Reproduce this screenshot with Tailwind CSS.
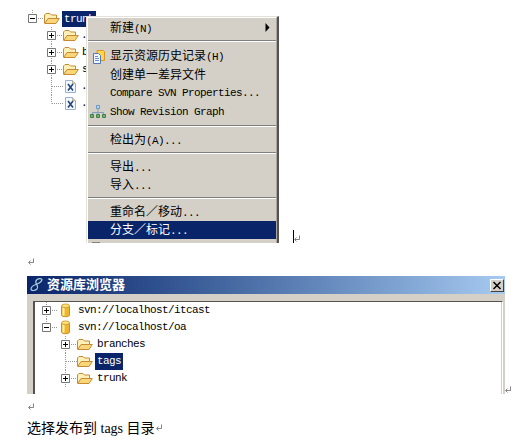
<!DOCTYPE html>
<html lang="zh-CN">
<head>
<meta charset="UTF-8" />
<meta name="viewport" content="width=device-width, initial-scale=1" />
<title>SVN tags</title>
<script src="https://cdn.jsdelivr.net/npm/@tailwindcss/browser@4"></script>
</head>
<body class="bg-white text-black overflow-hidden font-['Liberation_Mono','Noto_Sans_CJK_SC',monospace] text-[11px] tracking-[-0.6px]">

<!-- shared icons -->
<svg class="hidden">
  <symbol id="plus" viewBox="0 0 16 17">
    <path d="M4.5 0V17M10 8.5H16" stroke="#999" stroke-dasharray="1 1" />
    <path d="M.5 4.5h8v8h-8z" fill="#fff" stroke="#777" />
    <path d="M2 8.5h5M4.5 6v5" stroke="#000" />
  </symbol>
  <symbol id="minus" viewBox="0 0 16 17">
    <path d="M4.5 0V4M10 8.5H16" stroke="#999" stroke-dasharray="1 1" />
    <path d="M.5 4.5h8v8h-8z" fill="#fff" stroke="#777" />
    <path d="M2 8.5h5" stroke="#000" />
  </symbol>
  <symbol id="branch" viewBox="0 0 16 17">
    <path d="M4.5 0V17M5 8.5H16" stroke="#999" stroke-dasharray="1 1" fill="none" />
  </symbol>
  <symbol id="corner" viewBox="0 0 16 17">
    <path d="M4.5 0V8.5M5 8.5H16" stroke="#999" stroke-dasharray="1 1" fill="none" />
  </symbol>
  <symbol id="folder" viewBox="0 0 16 17">
    <path d="M.5 13V5L2 3.500h4L7.500 5H12.500V8" fill="#fff0b8" stroke="#c58a35" />
    <path d="M.7 13.500 4 8.500H15.300L12 13.500z" fill="#fbd679" stroke="#c58a35" stroke-linejoin="round" />
  </symbol>
  <symbol id="xfile" viewBox="0 0 16 17">
    <path d="M2.500 2.500h7l3 3v9h-10z" fill="#f3f8ff" stroke="#9ab0d0" />
    <path d="M9.500 2.500v3h3" fill="#e8d9a8" stroke="#b8b49a" />
    <path d="M5 6l5 6.500M10 6l-5 6.500" stroke="#244579" stroke-width="1.600" />
  </symbol>
  <symbol id="repo" viewBox="0 0 16 17">
    <path d="M3.500 4v9c0 2.300 8 2.300 8 0V4" fill="#efb52c" stroke="#c9902a" />
    <path d="M5.500 5v8.500" stroke="#fff3ae" stroke-width="2" />
    <ellipse cx="7.500" cy="3.800" rx="4" ry="1.800" fill="#fbe27c" stroke="#d3a034" />
  </symbol>
  <symbol id="enter" viewBox="0 0 8 8">
    <path d="M6.500 .5v4H2M3.500 2.500l-2 2 2 2" fill="none" stroke="#777" stroke-width=".9" />
  </symbol>
</svg>

<div class="relative h-[256px] pt-[10px] pl-7">
  <div class="flex items-center h-[17px]">
    <svg class="w-4 h-[17px]"><use href="#minus" /></svg>
    <svg class="w-4 h-[17px]"><use href="#folder" /></svg>
    <span class="ml-0.5 px-0.5 h-4 leading-4 bg-[#0a246a] text-white">trunk</span>
  </div>
  <div class="pl-[19px]">
    <div class="flex items-center h-[17px]">
      <svg class="w-4 h-[17px]"><use href="#plus" /></svg>
      <svg class="w-4 h-[17px]"><use href="#folder" /></svg>
      <span class="ml-0.5">.</span>
    </div>
    <div class="flex items-center h-[17px]">
      <svg class="w-4 h-[17px]"><use href="#plus" /></svg>
      <svg class="w-4 h-[17px]"><use href="#folder" /></svg>
      <span class="ml-[3px]">b</span>
    </div>
    <div class="flex items-center h-[17px]">
      <svg class="w-4 h-[17px]"><use href="#plus" /></svg>
      <svg class="w-4 h-[17px]"><use href="#folder" /></svg>
      <span class="ml-[3px]">s</span>
    </div>
    <div class="flex items-center h-[17px]">
      <svg class="w-4 h-[17px]"><use href="#branch" /></svg>
      <svg class="w-4 h-[17px]"><use href="#xfile" /></svg>
      <span class="ml-0.5">.</span>
    </div>
    <div class="flex items-center h-[17px]">
      <svg class="w-4 h-[17px]"><use href="#corner" /></svg>
      <svg class="w-4 h-[17px]"><use href="#xfile" /></svg>
      <span class="ml-0.5">.</span>
    </div>
  </div>

  <!-- context menu -->
  <div class="absolute left-[86px] top-4 w-[193px] h-[227px] bg-[#d4d0c8] border-l border-t border-[#e4e1da] border-r-2 border-r-[#55534f] overflow-hidden">
    <div class="h-full pt-px border-l border-t border-white border-r border-r-[#aaa69f] whitespace-nowrap">
      <div class="flex items-center h-[18px] pt-px pl-[22px] pr-[6px] justify-between">
        <span><span class="text-[12px] tracking-normal">新建</span>(N)</span>
        <svg class="w-[5px] h-[9px] mb-[3px]" viewBox="0 0 5 9"><path d="M0.500 0l4 4.500-4 4.500z" /></svg>
      </div>
      <div class="mt-[3px] mb-[5px] h-0.5 bg-white border-t border-[#808080]"></div>
      <div class="flex items-center h-[19px] pl-1">
        <svg class="w-[14px] h-4 mr-1" viewBox="0 0 14 16">
          <path d="M5 1.500h6.500l1 1v9H5z" fill="#ffd451" stroke="#d69a1e" />
          <path d="M1.500 4.500h5l2 2v8h-7z" fill="#f2f7ff" stroke="#5577b5" />
          <path d="M3 7.500h3M3 9.500h4M3 11.500h4" stroke="#6a8fd0" />
        </svg>
        <span><span class="text-[12px] tracking-normal">显示资源历史记录</span>(H)</span>
      </div>
      <div class="flex items-center h-[18px] pt-0.5 pl-[22px] text-[12px] tracking-normal">创建单一差异文件</div>
      <div class="flex items-center h-[19px] pl-[22px]">Compare SVN Properties...</div>
      <div class="flex items-center h-[18px] pl-0.5">
        <svg class="w-4 h-4 mr-1" viewBox="0 0 16 16">
          <path d="M8 5v3M2.500 11V8.500h11V11M8 8v3" fill="none" stroke="#7f9db9" />
          <path d="M6.500 1.500h3v3h-3z" fill="#b9d8f2" stroke="#6698c4" />
          <path d="M.5 10.500h3v3h-3zM6.500 10.500h3v3h-3zM12.500 10.500h3v3h-3z" fill="#74ad6d" stroke="#43814a" />
        </svg>
        <span>Show Revision Graph</span>
      </div>
      <div class="mt-1 mb-1 h-0.5 bg-white border-t border-[#808080]"></div>
      <div class="flex items-center h-[18px] pt-0.5 pl-[22px]"><span><span class="text-[12px] tracking-normal">检出为</span>(A)...</span></div>
      <div class="mt-[3px] mb-1 h-0.5 bg-white border-t border-[#808080]"></div>
      <div class="flex items-center h-[18px] pt-0.5 pl-[22px]"><span><span class="text-[12px] tracking-normal">导出</span>...</span></div>
      <div class="flex items-center h-[18px] pt-0.5 pl-[22px]"><span><span class="text-[12px] tracking-normal">导入</span>...</span></div>
      <div class="mt-[3px] mb-1 h-0.5 bg-white border-t border-[#808080]"></div>
      <div class="flex items-center h-[18px] pt-0.5 pl-[22px]"><span><span class="text-[12px] tracking-normal">重命名／移动</span>...</span></div>
      <div class="flex items-center h-[18px] pt-0.5 pl-[22px] bg-[#0a246a] text-white"><span><span class="text-[12px] tracking-normal">分支／标记</span>...</span></div>
      <div class="ml-1 mt-[3px] w-2 h-px bg-[#808080]"></div>
    </div>
  </div>

  <!-- text caret after the inline picture -->
  <div class="absolute left-[293px] top-[230px] flex items-end">
    <div class="w-px h-[13px] bg-black"></div>
    <svg class="w-2 h-2 -ml-px"><use href="#enter" /></svg>
  </div>
</div>

<div class="pl-[27px]">
  <div class="h-5 pt-0.5"><svg class="w-2 h-2"><use href="#enter" /></svg></div>

  <div class="flex items-end">
    <!-- repository browser -->
    <div class="w-[478px] h-[118px] flex flex-col bg-[#d4d0c8]">
      <div class="h-[18px] flex items-center pl-0.5 pr-px bg-linear-to-r from-[#0a246a] to-[#a6caf0]">
        <svg class="w-4 h-4" viewBox="0 0 16 16" fill="none" stroke="#a9d4dc" stroke-width="1.200">
          <path d="M13 2C9 1 6 3 7 6s3 4 1 6-6 2-6 0 3-4 6-5 5-3 5-5" />
        </svg>
        <span class="ml-0.5 text-[13px] tracking-normal leading-none font-bold text-white">资源库浏览器</span>
        <div class="ml-auto w-[14px] h-[13px] bg-[#d4d0c8] border border-t-white border-l-white border-r-[#404040] border-b-[#404040]">
          <svg class="w-3 h-[11px]" viewBox="0 0 12 11"><path d="M2.500 2l7 7M9.500 2l-7 7" stroke="#000" stroke-width="1.500" /></svg>
        </div>
      </div>
      <div class="flex-1 mt-[7px] ml-[6px] mr-[2px] bg-white border-l-2 border-t border-[#55534f] border-r border-r-white">
        <div class="h-full border-r border-[#d4d0c8] pl-[7px]">
          <div class="flex items-center h-[17px]">
            <svg class="w-4 h-[17px]"><use href="#plus" /></svg>
            <svg class="w-4 h-[17px]"><use href="#repo" /></svg>
            <span class="ml-1">svn://localhost/itcast</span>
          </div>
          <div class="flex items-center h-[17px]">
            <svg class="w-4 h-[17px]"><use href="#minus" /></svg>
            <svg class="w-4 h-[17px]"><use href="#repo" /></svg>
            <span class="ml-1">svn://localhost/oa</span>
          </div>
          <div class="pl-[19px]">
            <div class="flex items-center h-[17px]">
              <svg class="w-4 h-[17px]"><use href="#plus" /></svg>
              <svg class="w-4 h-[17px]"><use href="#folder" /></svg>
              <span class="ml-1">branches</span>
            </div>
            <div class="flex items-center h-[17px]">
              <svg class="w-4 h-[17px]"><use href="#branch" /></svg>
              <svg class="w-4 h-[17px]"><use href="#folder" /></svg>
              <span class="ml-0.5 px-0.5 h-[17px] leading-4 bg-[#0a246a] text-white">tags</span>
            </div>
            <div class="flex items-center h-[17px]">
              <svg class="w-4 h-[17px]"><use href="#plus" /></svg>
              <svg class="w-4 h-[17px]"><use href="#folder" /></svg>
              <span class="ml-1">trunk</span>
            </div>
          </div>
        </div>
      </div>
    </div>
    <svg class="w-2 h-2 -ml-px"><use href="#enter" /></svg>
  </div>

  <div class="h-[22px] pt-[9px]"><svg class="w-2 h-2"><use href="#enter" /></svg></div>
  <p class="flex items-center h-6 text-[14px] tracking-normal font-['Liberation_Serif','Noto_Sans_CJK_SC',serif]">
    选择发布到 tags 目录<svg class="w-2 h-2"><use href="#enter" /></svg>
  </p>
</div>

</body>
</html>
